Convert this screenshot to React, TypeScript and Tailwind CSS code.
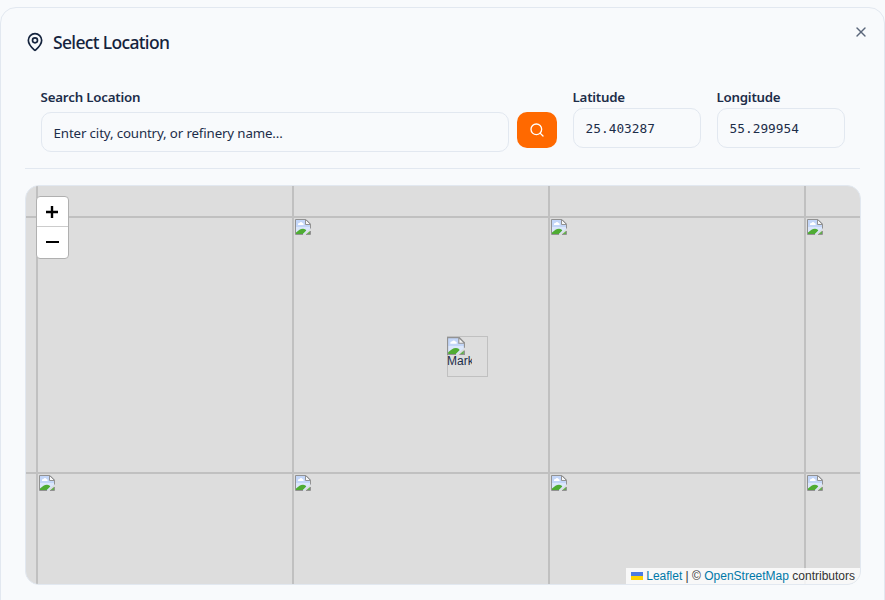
import React from "react";
import { MapPin, Search, X } from "lucide-react";

function BrokenImage({ size = 16 }: { size?: number }) {
  return (
    <svg width={size} height={size} viewBox="0 0 16 16" className="block shrink-0">
      <path d="M0.5 0.5H11L15.5 5V9.5L8.5 15.5H0.5Z" fill="#c3d6f8" />
      <path d="M1 8H15V10L9 15H1Z" fill="#dbe7fb" />
      <path d="M3 6V5C3 4 4 4 4.5 4C5 2.800 7 2.800 7.500 4C8.500 4 9 5 8.500 6Z" fill="#fff" />
      <path d="M1 15V13.500C4 11.500 5 9.800 8 9.800C9.800 9.800 10.500 10.500 11.300 11.500L7.800 15Z" fill="#4fac33" />
      <path d="M8 15.500H0.500V0.500H11L15.500 5V9.500" fill="none" stroke="#929292" />
      <path d="M10.500 0.500V5.500H15.500Z" fill="#f7f7f7" stroke="#929292" strokeLinejoin="round" />
      <path d="M11.500 15L15 12V15Z" fill="#63ad4d" />
      <path d="M11 15.500H15.500V12" fill="none" stroke="#929292" />
    </svg>
  );
}

function Coordinate({ label, value }: { label: string; value: string }) {
  return (
    <div className="w-32 shrink-0">
      <div className="h-5 text-[13.3px] leading-[18px] font-semibold tracking-[-0.25px]">{label}</div>
      <div className="flex h-10 items-center rounded-[10px] border border-slate-200 px-3 pt-0.5 font-['DejaVu_Sans_Mono',monospace] text-[12.8px]">
        {value}
      </div>
    </div>
  );
}

const tiles = Array.from({ length: 15 }, (_, i) => i);

export default function App() {
  return (
    <div className="h-[600px] w-[885px] overflow-hidden bg-slate-50 pt-[7px] font-['Noto_Sans',sans-serif] text-[#1c2d49]">
      <div className="relative h-[620px] w-[885px] rounded-2xl border border-slate-200 px-6 pt-[23px]">
        <button className="absolute top-4 right-[15.5px] text-[#5a667a]">
          <X size={16} />
        </button>
        <div className="flex h-[22px] items-center gap-2">
          <MapPin size={20} className="text-[#14233d]" />
          <h1 className="text-[17.5px] leading-[22px] font-medium tracking-[-0.65px] text-[#14233d]">Select Location</h1>
        </div>
        <div className="mt-[19px] flex h-[97px] border-b border-slate-200 pt-4 pl-[15.6px]">
          <div className="w-[468px] shrink-0">
            <div className="h-6 text-[13.3px] leading-[18px] font-semibold tracking-[-0.2px]">Search Location</div>
            <div className="flex h-10 items-center rounded-[10px] border border-slate-200 px-3 pt-[3px] text-[13.3px] tracking-[-0.14px]">
              Enter city, country, or refinery name...
            </div>
          </div>
          <button className="mt-6 ml-2 flex h-9 w-10 shrink-0 items-center justify-center rounded-[10px] bg-[#ff6900] text-white">
            <Search size={16} />
          </button>
          <div className="ml-4 flex gap-4">
            <Coordinate label="Latitude" value="25.403287" />
            <Coordinate label="Longitude" value="55.299954" />
          </div>
        </div>
        <div className="relative mt-4 h-[400px] w-[836px] overflow-hidden rounded-[14px] border border-slate-200 bg-[#ddd]">
          <div className="-mt-[225px] -ml-[245px] grid w-[1280px] grid-cols-5">
            {tiles.map((i) => (
              <div key={i} className="h-64 w-64 border border-[#c0c0c0] p-px">
                <BrokenImage />
              </div>
            ))}
          </div>
          <div className="absolute top-[150px] left-[421px] h-[41px] w-[41px] border border-[#c0c0c0] font-['Liberation_Sans',Arial,sans-serif] text-xs">
            <div className="-ml-px h-4">
              <BrokenImage size={18} />
            </div>
            <div className="-ml-px w-[25px] overflow-hidden leading-[16px]">Mark</div>
          </div>
          <div className="absolute top-[10px] left-[10px] w-[33px] rounded-[4px] border border-[#b0b0b0] bg-white text-black">
            <div className="flex h-[30px] items-center border-b border-[#ccc] pl-2">
              <svg width="14" height="14" viewBox="0 0 14 14"><path d="M1 7H13M7 1V13" stroke="currentColor" strokeWidth="2.400" /></svg>
            </div>
            <div className="flex h-[31px] items-start pt-2 pl-2">
              <svg width="14" height="14" viewBox="0 0 14 14"><path d="M1 7H14" stroke="currentColor" strokeWidth="2" /></svg>
            </div>
          </div>
          <div className="absolute right-0 bottom-0 flex h-4 items-center bg-white/80 px-[5px] font-['Liberation_Sans',Arial,sans-serif] text-xs leading-4 whitespace-pre text-[#333]">
            <svg width="12" height="8" className="mr-[3px]"><path fill="#4C7BE1" d="M0 0h12v4H0z" /><path fill="#FFD500" d="M0 4h12v4H0z" /></svg>
            <span className="text-[#0078a8]">Leaflet</span> | © <span className="text-[#0078a8]">OpenStreetMap</span> contributors
          </div>
        </div>
      </div>
    </div>
  );
}
